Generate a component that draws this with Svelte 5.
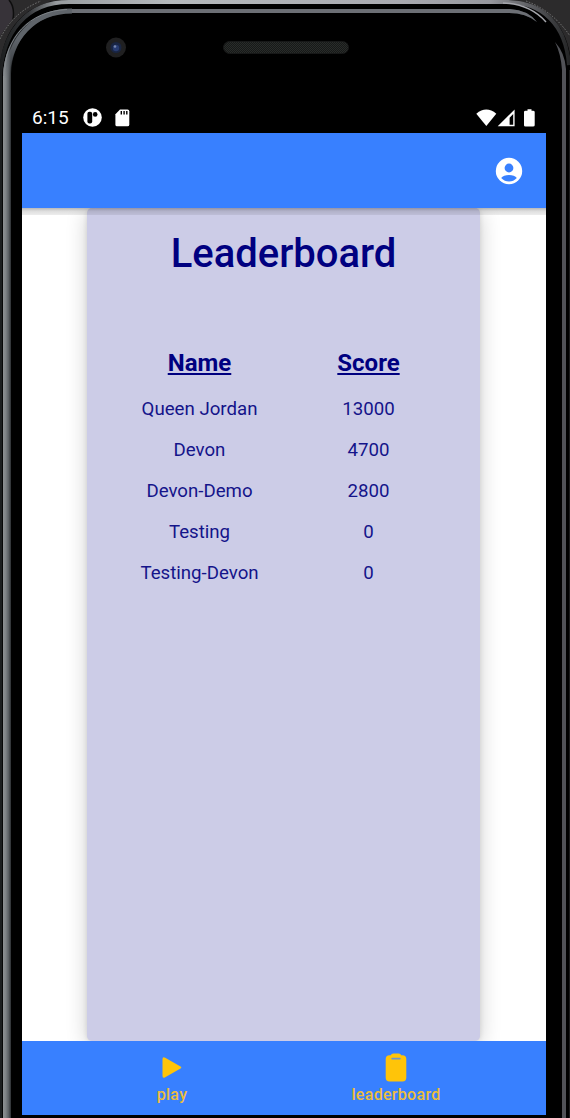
<script>
  const rows = [
    ['Queen Jordan', '13000'],
    ['Devon', '4700'],
    ['Devon-Demo', '2800'],
    ['Testing', '0'],
    ['Testing-Devon', '0']
  ];
</script>

<div class="device">
  <svg class="bezel" width="570" height="1118" viewBox="0 0 570 1118" fill="none" aria-hidden="true">
    <defs>
      <linearGradient id="rim" x1="0" y1="0" x2="570" y2="0" gradientUnits="userSpaceOnUse">
        <stop offset="0" stop-color="#1c1e1f" />
        <stop offset=".05" stop-color="#35373a" />
        <stop offset=".1" stop-color="#989ca0" />
        <stop offset=".3" stop-color="#b5b9bc" />
        <stop offset=".7" stop-color="#a9aab0" />
        <stop offset=".86" stop-color="#97989e" />
        <stop offset=".94" stop-color="#55565a" />
        <stop offset="1" stop-color="#242526" />
      </linearGradient>
      <linearGradient id="side" x1="3" y1="0" x2="11" y2="0" gradientUnits="userSpaceOnUse">
        <stop offset="0" stop-color="#8d9193" />
        <stop offset=".35" stop-color="#7e8386" />
        <stop offset=".7" stop-color="#5b6064" />
        <stop offset="1" stop-color="#2b2e31" />
      </linearGradient>
      <linearGradient id="corner" x1="0" y1="40" x2="0" y2="80" gradientUnits="userSpaceOnUse">
        <stop offset="0" stop-color="#5f646a" />
        <stop offset="1" stop-color="#5f646a" stop-opacity="0" />
      </linearGradient>
      <pattern id="mesh" width="2" height="2" patternUnits="userSpaceOnUse">
        <rect width="2" height="2" fill="#171918" />
        <rect width="1" height="1" fill="#292c2a" />
        <rect x="1" y="1" width="1" height="1" fill="#292c2a" />
      </pattern>
    </defs>
    <rect width="570" height="1118" fill="#2c2b2c" />
    <path d="M0 0H9Q14 6 13 18L0 36Z" fill="#373339" />
    <path d="M9 0Q15 7 13 19" stroke="#0e0e0e" stroke-width="1.5" />
    <path d="M0 1118V70C1 29 27 0 68 0H506C543 0 569 25 571 64V1118Z" fill="#000" />
    <path d="M0 39Q13 12 41 1M526 1Q553 11 570 36" stroke="#7b7b7b" stroke-width="1" stroke-dasharray="1.5 1.5" />
    <path d="M0 1118V78C2 32 26 2 69 2H506C543 2 566 25 569 65" stroke="url(#rim)" stroke-width="4" />
    <path d="M503 3Q530 4 546 22" stroke="#a5a6ac" stroke-width="1.5" />
    <path d="M3 1118V76C5 35 30 9 71 9H510Q528 10 537 22Q526 13 509 13H72C36 13 12 39 11 74V1118Z" fill="url(#side)" />
    <path d="M7 78C9 39 33 11 72 11" stroke="url(#corner)" stroke-width="5" />
    <path d="M72 9H510Q528 10 537 22Q526 13 509 13H72Z" fill="#6c6f75" />
    <path d="M3.5 76C5 38 29 11 67 9.5" stroke="#7e8388" stroke-width="1" />
    <path d="M555 42Q565 53 566 69V1118H562V70Q561 54 555 42Z" fill="#515257" />
    <path d="M569.5 70V1118" stroke="#1b1b1c" />
    <path d="M1 76V1118" stroke="#1c1f20" stroke-width="2" />
    <path d="M2.5 76V1118" stroke="#070808" />
    <circle cx="116" cy="47.5" r="10" fill="#202021" />
    <circle cx="116" cy="47.5" r="5.5" fill="#192542" />
    <circle cx="116" cy="48" r="3.2" fill="#273b70" />
    <circle cx="115" cy="46.5" r="1.3" fill="#7786ac" />
    <rect x="223.5" y="41.5" width="125" height="12" rx="6" fill="url(#mesh)" stroke="#171818" />
  </svg>

  <div class="screen">
    <div class="status">
      <span class="time">6:15</span>
      <svg class="app" width="19" height="19" viewBox="0 0 19 19">
        <circle cx="9.5" cy="9.5" r="9.3" fill="#fff" />
        <rect x="4.4" y="3.8" width="4.8" height="11.7" rx="2" fill="#000" />
        <circle cx="12.2" cy="6.4" r="2.3" fill="#000" />
      </svg>
      <svg class="card-icon" width="15" height="18" viewBox="0 0 15 18">
        <path d="M5 .5H12.5Q14.3.5 14.3 2.3V15.7Q14.3 17.3 12.5 17.3H2Q.4 17.3.4 15.7V5.3Z" fill="#fff" />
        <path d="M6.3 2V5.5M9.1 2V5.5M11.8 2V5.5" stroke="#000" stroke-width="1.4" />
      </svg>
      <svg class="signals" width="60" height="18" viewBox="0 0 60 18" fill="#fff">
        <path d="M.3 4.7Q10.3-3.7 20.3 4.7L10.3 17Z" />
        <path fill-rule="evenodd" d="M38.6.5V17.2H21.7ZM37.2 5L33.6 8.7V15.8H37.2Z" />
        <path d="M50.5 1.7H51.5V.3H55.5V1.7H57Q58.7 1.7 58.7 3V16.2Q58.7 17.6 57 17.6H49.5Q48 17.6 48 16.2V3Q48 1.7 49.5 1.7Z" />
      </svg>
    </div>

    <header>
      <svg width="28" height="28" viewBox="0 0 28 28">
        <circle cx="14" cy="14" r="13.2" fill="#fff" />
        <circle cx="14" cy="11" r="4.4" fill="#3880ff" />
        <path d="M6.2 21C8.5 17 19.5 17 21.8 21Q18.5 24.6 14 24.6Q9.5 24.6 6.2 21Z" fill="#3880ff" />
      </svg>
    </header>

    <main>
      <section class="card">
        <h1>Leaderboard</h1>
        <div class="table">
          <div class="row head"><span>Name</span><span>Score</span></div>
          {#each rows as [name, score]}
            <div class="row"><span>{name}</span><span>{score}</span></div>
          {/each}
        </div>
      </section>
    </main>

    <nav>
      <div class="tab">
        <svg width="32" height="32" viewBox="0 0 32 32">
          <path d="M6.5 8.2Q6.5 5.3 9.2 6.8L24.5 15.5Q26.2 16.5 24.5 17.5L9.2 26.3Q6.5 27.8 6.5 24.8Z" fill="#ffc409" />
        </svg>
        <span>play</span>
      </div>
      <div class="tab">
        <svg width="32" height="32" viewBox="0 0 32 32">
          <path d="M9.5 4.2H10.7Q11.5 2.5 13.3 2.5H18.7Q20.5 2.5 21.3 4.2H22.5Q26.3 4.2 26.3 8V26.8Q26.3 30.5 22.5 30.5H9.5Q5.7 30.5 5.7 26.8V8Q5.7 4.2 9.5 4.2Z" fill="#ffc409" />
          <path d="M12.2 7.6H19.8" stroke="#6f94c8" stroke-width="1.8" stroke-linecap="round" />
        </svg>
        <span>leaderboard</span>
      </div>
    </nav>
  </div>
</div>

<style>
  :global(body) { background: #000; }
  .device {
    position: relative;
    box-sizing: border-box;
    width: 570px;
    height: 1118px;
    padding: 102px 24px 3px 22px;
    overflow: hidden;
    font-family: Roboto, sans-serif;
  }
  .bezel { position: absolute; inset: 0; }
  .screen { position: relative; height: 1013px; display: flex; flex-direction: column; background: #fff; }
  svg { display: block; flex: none; }
  .status {
    height: 31px;
    flex: none;
    display: flex;
    align-items: center;
    box-sizing: border-box;
    padding: 0 7px 0 10px;
    background: #000;
    color: #fff;
  }
  .time { font-size: 19px; line-height: 31px; width: 51px; }
  .card-icon { margin-left: 13px; }
  .signals { margin-left: auto; margin-right: 3px; }
  header {
    position: relative;
    z-index: 1;
    height: 75px;
    flex: none;
    display: flex;
    justify-content: flex-end;
    align-items: center;
    box-sizing: border-box;
    padding-right: 23px;
    background: #3880ff;
  }
  header::after {
    content: '';
    position: absolute;
    top: 100%;
    left: 0;
    right: 0;
    height: 7px;
    background: linear-gradient(rgba(0, 0, 0, .28), rgba(0, 0, 0, .13) 45%, rgba(0, 0, 0, .07));
  }
  main { flex: 1; overflow: hidden; padding: 0 66px 0 65px; }
  .card {
    height: 100%;
    box-sizing: border-box;
    padding-top: 21px;
    background: #cccce7;
    border-radius: 5px;
    box-shadow: 0 4px 21px rgba(0, 0, 0, .2), 0 0 5px rgba(0, 0, 0, .1);
    color: #000080;
  }
  h1 { margin: 0 0 64px; font-size: 40px; line-height: 50px; font-weight: 500; text-align: center; }
  .table { width: 338px; margin-left: 28px; }
  .row { display: grid; grid-template-columns: 1fr 1fr; height: 41px; line-height: 41px; font-size: 18.667px; text-align: center; color: #14148a; }
  .row.head { height: 46px; font-size: 24px; font-weight: 700; color: #000080; text-decoration: underline; text-decoration-thickness: 1.5px; text-underline-offset: 2px; }
  nav {
    height: 74px;
    flex: none;
    display: grid;
    grid-template-columns: 224px 224px;
    justify-content: center;
    box-sizing: border-box;
    padding-top: 10px;
    background: #3880ff;
    color: #ecbd3b;
  }
  .tab { display: flex; flex-direction: column; align-items: center; font-size: 16px; line-height: 24px; letter-spacing: .3px; font-weight: 500; }
</style>
